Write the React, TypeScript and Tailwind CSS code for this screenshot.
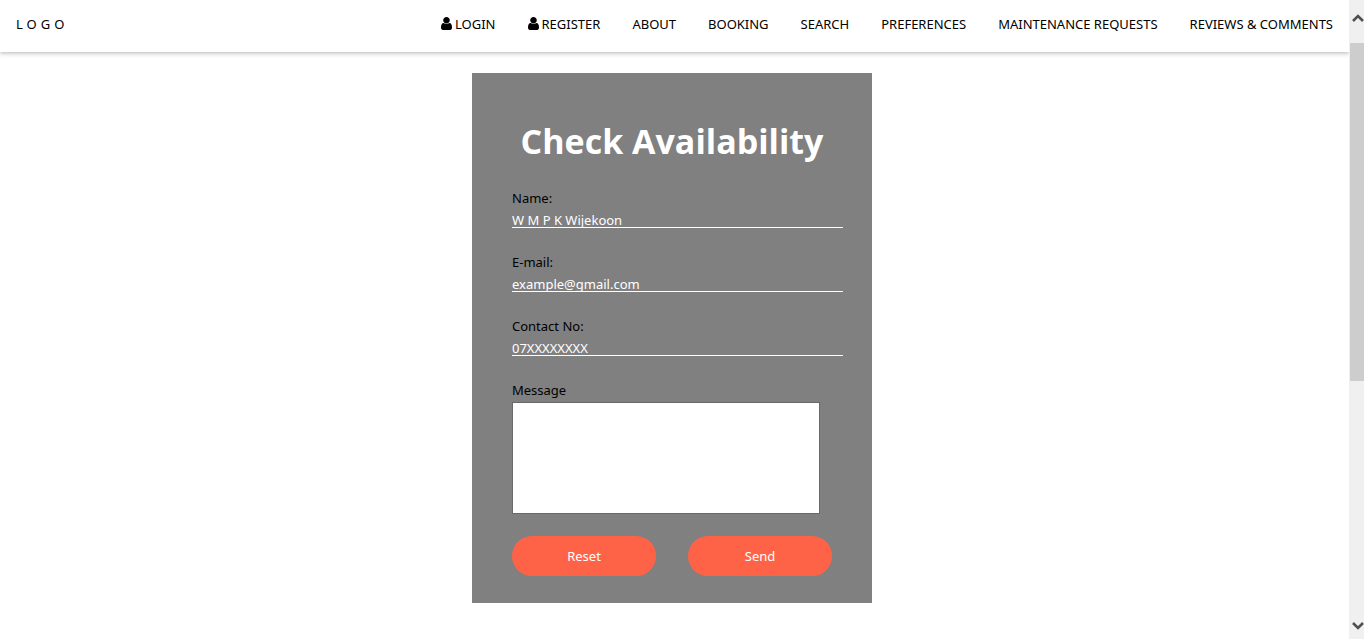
import React from "react";

const links = [
  { label: "LOGIN", icon: true },
  { label: "REGISTER", icon: true },
  { label: "ABOUT" },
  { label: "BOOKING" },
  { label: "SEARCH" },
  { label: "PREFERENCES" },
  { label: "MAINTENANCE REQUESTS" },
  { label: "REVIEWS & COMMENTS" },
];

const fields = [
  { id: "name", label: "Name:", type: "text", placeholder: "W M P K Wijekoon" },
  { id: "email", label: "E-mail:", type: "email", placeholder: "example@gmail.com" },
  { id: "contact", label: "Contact No:", type: "tel", placeholder: "07XXXXXXXX" },
];

function UserIcon() {
  return (
    <svg viewBox="256 128 1280 1536" preserveAspectRatio="none" className="-mt-px h-[13px] w-[11px]" fill="currentColor" aria-hidden="true">
      <path d="M1536 1399q0 109-62.5 187t-150.5 78h-854q-88 0-150.5-78t-62.5-187q0-85 8.5-160.5t31.5-152 58.5-131 94-89 134.5-34.5q131 128 313 128t313-128q76 0 134.5 34.5t94 89 58.5 131 31.5 152 8.5 160.5zm-256-887q0 159-112.5 271.5t-271.5 112.5-271.5-112.5-112.5-271.5 112.5-271.5 271.5-112.5 271.5 112.5 112.5 271.5z" />
    </svg>
  );
}

function Chevron({ d }: { d: string }) {
  return (
    <svg viewBox="0 0 12 10" className="h-[10px] w-[12px]" fill="none" stroke="#505050" strokeWidth="2.6" aria-hidden="true">
      <path d={d} />
    </svg>
  );
}

function Navbar() {
  return (
    <header className="flex h-[52px] items-center justify-between bg-white px-4 pb-1 shadow-[0_2px_5px_0_rgba(0,0,0,0.16),0_1px_3px_0_rgba(0,0,0,0.12)]">
      <a href="#home" className="tracking-[4px]">LOGO</a>
      <nav className="flex gap-8">
        {links.map((link) => (
          <a key={link.label} href="#" className="flex items-center gap-[3px] whitespace-nowrap">
            {link.icon && <UserIcon />}
            {link.label}
          </a>
        ))}
      </nav>
    </header>
  );
}

function AvailabilityForm() {
  return (
    <form className="mx-auto w-[400px] bg-[#808080] pt-[41px] pr-[29px] pb-[27px] pl-10" onSubmit={(e) => e.preventDefault()}>
      <h1 className="pr-[11px] text-center font-['Open_Sans','Noto_Sans',sans-serif] text-[34px] leading-[54px] font-bold text-white">
        Check Availability
      </h1>
      <div className="mt-5 flex flex-col gap-6">
        {fields.map((field) => (
          <div key={field.id} className="flex flex-col">
            <label htmlFor={field.id} className="leading-5">{field.label}</label>
            <input
              id={field.id}
              type={field.type}
              placeholder={field.placeholder}
              className="h-5 border-b border-white bg-transparent pt-1 leading-4 text-white outline-none placeholder:text-white placeholder:opacity-100"
            />
          </div>
        ))}
        <div className="flex flex-col items-start gap-0.5">
          <label htmlFor="message" className="leading-5">Message</label>
          <textarea id="message" className="h-[112px] w-[308px] resize-none border border-[#696969] bg-white p-1 outline-none" />
        </div>
      </div>
      <div className="mt-[22px] flex gap-8">
        <button type="reset" className="h-10 w-36 rounded-full bg-[#ff6347] text-white">Reset</button>
        <button type="submit" className="h-10 w-36 rounded-full bg-[#ff6347] text-white">Send</button>
      </div>
    </form>
  );
}

export default function App() {
  return (
    <div className="flex min-h-screen bg-white font-['Noto_Sans','Open_Sans',sans-serif] text-[13px] leading-5 text-black">
      <div className="min-w-0 flex-1">
        <Navbar />
        <main className="pt-[21px] pr-[5px] pb-9">
          <AvailabilityForm />
        </main>
      </div>
      <div className="flex w-[15px] flex-col items-end bg-[#f0f0f0] pt-[13px] pb-2" aria-hidden="true">
        <Chevron d="M1 8 6 3l5 5" />
        <div className="mt-5 h-[338px] w-[14px] bg-[#cdcdcd]" />
        <div className="flex-1" />
        <Chevron d="M1 2l5 5 5-5" />
      </div>
    </div>
  );
}
